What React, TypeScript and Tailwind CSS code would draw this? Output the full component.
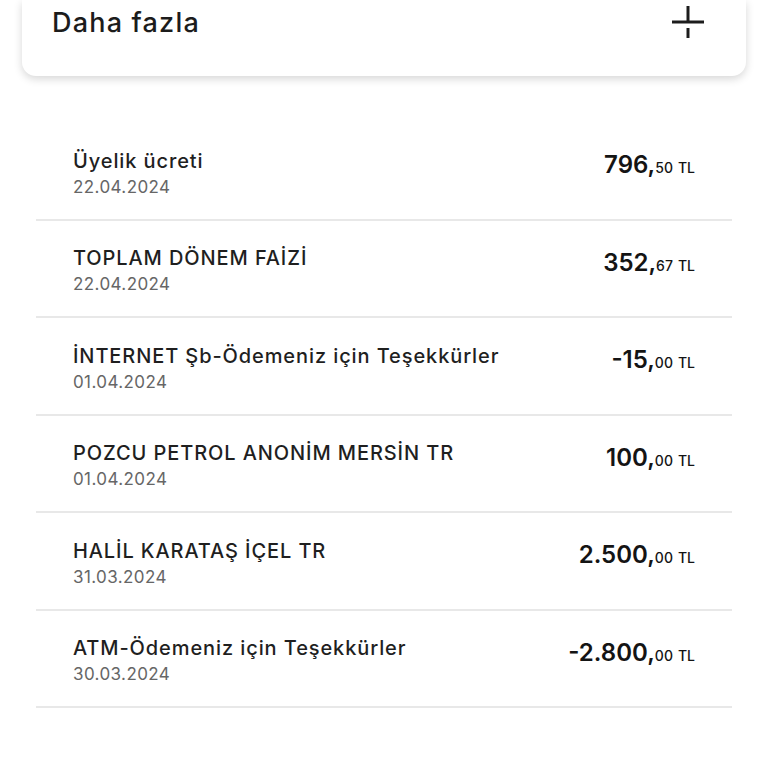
import React from "react";

type Row = { title: string; date: string; main: string; frac: string };

const rows: Row[] = [
  { title: "Üyelik ücreti", date: "22.04.2024", main: "796,", frac: "50" },
  { title: "TOPLAM DÖNEM FAİZİ", date: "22.04.2024", main: "352,", frac: "67" },
  { title: "İNTERNET Şb-Ödemeniz için Teşekkürler", date: "01.04.2024", main: "-15,", frac: "00" },
  { title: "POZCU PETROL ANONİM MERSİN TR", date: "01.04.2024", main: "100,", frac: "00" },
  { title: "HALİL KARATAŞ İÇEL TR", date: "31.03.2024", main: "2.500,", frac: "00" },
  { title: "ATM-Ödemeniz için Teşekkürler", date: "30.03.2024", main: "-2.800,", frac: "00" },
];

function PlusIcon() {
  return (
    <svg width="36" height="36" viewBox="0 0 36 36" className="text-[#1c1c1c]">
      <line x1="18" y1="2" x2="18" y2="18" stroke="currentColor" strokeWidth="3" />
      <line x1="2" y1="18" x2="34" y2="18" stroke="currentColor" strokeWidth="3" />
      <line x1="18" y1="24" x2="18" y2="34" stroke="currentColor" strokeWidth="3" />
    </svg>
  );
}

export default function App() {
  return (
    <div
      className="w-[768px] h-[768px] bg-white overflow-hidden"
      style={{ fontFamily: "Inter, 'Noto Sans', sans-serif" }}
    >
      <div className="mx-[22px] h-[76px] bg-white rounded-b-[14px] shadow-[0_3px_8px_rgba(0,0,0,0.16)] flex justify-between items-start pl-[30px] pr-[40px]">
        <div className="text-[27px] leading-[32px] font-medium tracking-[1.2px] text-[#1c1c1c] mt-[7px]">Daha fazla</div>
        <div className="mt-[4px]">
          <PlusIcon />
        </div>
      </div>
      <div className="mx-[36px] mt-[47px]">
        {rows.map((r, i) => (
          <div
            key={i}
            className="h-[97.5px] border-b-2 border-[#e8e8e8] flex items-center justify-between pl-[37px] pr-[37px]"
          >
            <div className="flex flex-col mt-[6px]">
              <div className="text-[20px] leading-[27px] font-medium tracking-[0.9px] text-[#1f1f1f]">{r.title}</div>
              <div className="text-[17px] leading-[25px] tracking-[0.4px] text-[#666666]">{r.date}</div>
            </div>
            <div className="self-start mt-[26px] flex items-baseline text-[#141414]">
              <span className="text-[24px] leading-[32px] font-semibold">{r.main}</span>
              <span className="text-[14px] font-medium">{r.frac}</span>
              <span className="text-[14px] font-medium ml-[5px]">TL</span>
            </div>
          </div>
        ))}
      </div>
    </div>
  );
}
